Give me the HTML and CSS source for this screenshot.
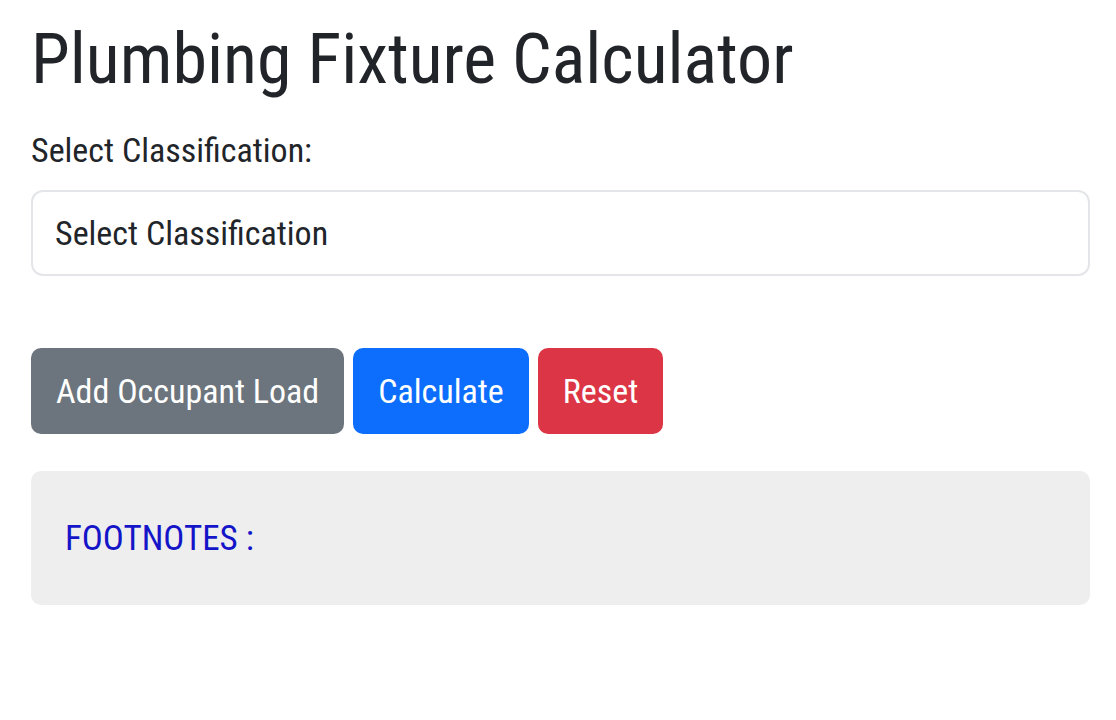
FILE: index.html
```html
<!DOCTYPE html>
<html lang="en">
<head>
<meta charset="utf-8">
<title>Plumbing Fixture Calculator</title>
<link rel="stylesheet" href="styles.css">
</head>
<body>
<main class="page">
  <h1 class="title">Plumbing Fixture Calculator</h1>
  <label class="field-label" for="classification">Select Classification:</label>
  <select class="select" id="classification">
    <option>Select Classification</option>
  </select>
  <div class="actions">
    <button class="btn btn-secondary" type="button">Add Occupant Load</button>
    <button class="btn btn-primary" type="button">Calculate</button>
    <button class="btn btn-danger" type="button">Reset</button>
  </div>
  <section class="footnotes">
    <p class="footnotes-title">FOOTNOTES :</p>
  </section>
</main>
</body>
</html>
```

FILE: styles.css
```css
* {
  box-sizing: border-box;
}

html, body {
  margin: 0;
  padding: 0;
  background: #ffffff;
}

body {
  font-family: Roboto, "Liberation Sans", Arial, sans-serif;
  font-stretch: 87.5%;
  color: #212529;
}

.page {
  display: flex;
  flex-direction: column;
  align-items: stretch;
  padding: 17px 26px 0 31px;
}

.title {
  margin: 0;
  font-size: 70px;
  font-weight: 400;
  line-height: 1.2;
  color: #212529;
}

.field-label {
  display: block;
  margin-top: 24px;
  font-size: 34px;
  line-height: 1.5;
  color: #212529;
}

.select {
  margin-top: 14px;
  height: 86px;
  width: 100%;
  padding: 0 22px;
  font-family: inherit;
  font-stretch: inherit;
  font-size: 34px;
  color: #212529;
  background: #ffffff;
  border: 2px solid #e3e5e8;
  border-radius: 12px;
  appearance: none;
  -webkit-appearance: none;
}

.actions {
  display: flex;
  gap: 9px;
  margin-top: 72px;
}

.btn {
  height: 86px;
  padding: 0 25px;
  border: none;
  border-radius: 10px;
  font-family: inherit;
  font-stretch: inherit;
  font-size: 34px;
  color: #ffffff;
  line-height: 1;
}

.btn-secondary {
  background: #6c757d;
}

.btn-primary {
  background: #0d6efd;
}

.btn-danger {
  background: #dc3545;
}

.footnotes {
  display: flex;
  align-items: center;
  margin-top: 37px;
  height: 134px;
  padding: 0 34px;
  background: #eeeeee;
  border-radius: 10px;
}

.footnotes-title {
  margin: 0;
  font-size: 35px;
  color: #1414c8;
}
```
